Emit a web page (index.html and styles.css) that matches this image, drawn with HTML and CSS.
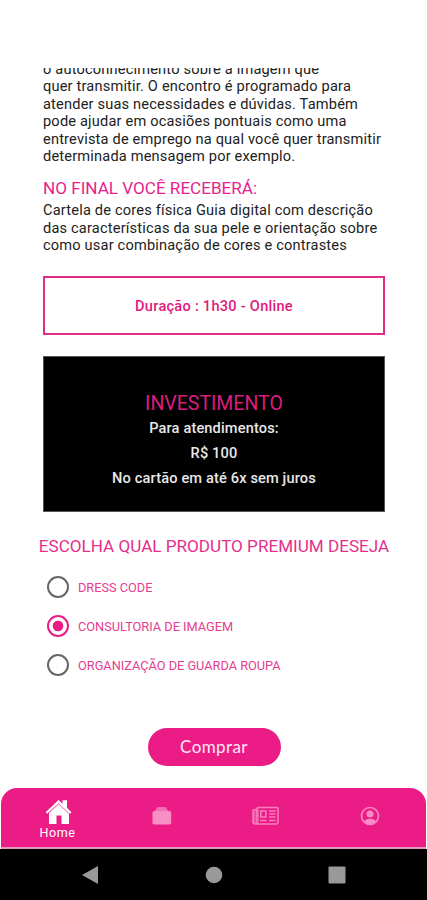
FILE: index.html
```html
<!DOCTYPE html>
<html lang="pt-BR">
<head>
<meta charset="utf-8">
<meta name="viewport" content="width=device-width, initial-scale=1">
<title>Consultoria de imagem</title>
<link rel="stylesheet" href="styles.css">
</head>
<body>
<main class="content">
  <p class="copy intro">o autoconhecimento sobre a imagem que<br>quer transmitir. O encontro é programado para<br>atender suas necessidades e dúvidas. Também<br>pode ajudar em ocasiões pontuais como uma<br>entrevista de emprego na qual você quer transmitir<br>determinada mensagem por exemplo.</p>
  <h2 class="heading">NO FINAL VOCÊ RECEBERÁ:</h2>
  <p class="copy">Cartela de cores física Guia digital com descrição<br>das características da sua pele e orientação sobre<br>como usar combinação de cores e contrastes</p>
  <div class="duration">Duração : 1h30 - Online</div>
  <section class="price">
    <h2 class="price-title">INVESTIMENTO</h2>
    <p>Para atendimentos:</p>
    <p>R$ 100</p>
    <p>No cartão em até 6x sem juros</p>
  </section>
  <h2 class="choose">ESCOLHA QUAL PRODUTO PREMIUM DESEJA</h2>
  <div class="options">
    <label class="option"><input type="radio" name="product"><span>DRESS CODE</span></label>
    <label class="option"><input type="radio" name="product" checked><span>CONSULTORIA DE IMAGEM</span></label>
    <label class="option"><input type="radio" name="product"><span>ORGANIZAÇÃO DE GUARDA ROUPA</span></label>
  </div>
  <button class="buy" type="button">Comprar</button>
</main>
<nav class="tabs">
  <a class="tab active">
    <svg width="28" height="26" viewBox="0 0 28 26"><path d="M14.5 4.5 25 13.5V25h-7.500v-8.500h-5V25H5V13.500z" fill="#fff"/><path d="M1.700 13.200 14.500 1l4 3.700V1.200h4.500v7.600l4.400 4.400-1.400 1.500L14.500 4.300 3.100 14.700z" fill="#fff"/><path d="M3.900 14.800 14.500 5.200l10.600 9.600" fill="none" stroke="#ec1c86" stroke-width=".6"/></svg>
    <span>Home</span>
  </a>
  <a class="tab"><svg width="20" height="18" viewBox="0 0 20 18"><path d="M5.500 0h8l3.200 4.500H2.300z" fill="#f56eb4"/><rect x=".5" y="4" width="18.700" height="13.500" rx="1.800" fill="#f88fc4"/></svg></a>
  <a class="tab"><svg width="28" height="20" viewBox="0 0 28 20"><rect x="1" y="3" width="6" height="15" rx="2" fill="#f04fa2"/><g fill="none" stroke="#f77fbb" stroke-width="1.600"><path d="M5 16.200V3q0-1.500 1.500-1.500h18q1.500 0 1.500 1.500v13q0 2-2 2H3q-2 0-2-2V5q0-1.500 1.500-1.500H5M5 16q0 2-2 2"/><rect x="8.800" y="5" width="5" height="6"/><path d="M17 5h6.500M17 8h6.500M17 11h6.500M8 14.500h6.500M17 14.500h6.500"/></g></svg></a>
  <a class="tab"><svg width="20" height="20" viewBox="0 0 20 20"><circle cx="10" cy="10" r="8.500" fill="none" stroke="#f98cc4" stroke-width="1.600"/><circle cx="10" cy="8" r="3.500" fill="#f98cc4"/><path d="M4 15.200q2-2.400 6-2.400t6 2.400q-2.200 3-6 3t-6-3z" fill="#f98cc4"/></svg></a>
</nav>
<div class="system">
  <svg width="18" height="20" viewBox="0 0 18 20"><path d="M17 1v18L1 10z" fill="#999"/></svg>
  <svg width="18" height="18" viewBox="0 0 18 18"><circle cx="9" cy="9" r="8.300" fill="#999"/></svg>
  <svg width="18" height="18" viewBox="0 0 18 18"><rect x=".5" y=".5" width="17" height="17" rx="1" fill="#999"/></svg>
</div>
</body>
</html>
```
FILE: styles.css
```css
* { box-sizing: border-box; }
body { margin: 0; width: 427px; height: 900px; overflow: hidden; display: flex; flex-direction: column; background: #fff; font-family: Roboto, "Liberation Sans", sans-serif; color: #222; }
h2, p { margin: 0; font-weight: 400; }
.content { height: 720px; flex: none; margin-top: 68px; padding: 0 42px 0 43px; overflow: hidden; display: flex; flex-direction: column; }
.copy { font-size: 14.6px; line-height: 17.4px; white-space: nowrap; letter-spacing: .18px; }
.intro { margin-top: -7px; }
.heading { margin-top: 13px; font-size: 17.1px; line-height: 20px; color: #e91e8c; white-space: nowrap; }
.heading + .copy { margin-top: 4px; }
.duration { height: 59px; margin-top: 21px; flex: none; border: 2px solid #e32b85; display: flex; align-items: center; justify-content: center; font-size: 14.6px; letter-spacing: .25px; font-weight: 500; color: #e01a7c; padding-top: 1px; }
.price { height: 156px; flex: none; margin-top: 21px; padding-top: 34px; background: #000; border: 1px solid #555; text-align: center; color: #e8e8e8; font-size: 14.6px; line-height: 25px; }
.price p { font-weight: 500; letter-spacing: .14px; }
.price-title { font-size: 19.5px; line-height: 25px; color: #dc1c80; }
.choose { margin: 23px -10px 0; text-align: center; font-size: 17.1px; line-height: 22px; color: #e4308c; white-space: nowrap; }
.options { margin: 11px 0 0 4px; display: flex; flex-direction: column; }
.option { height: 39px; display: flex; align-items: center; gap: 9px; font-size: 12.75px; color: #e5408f; }
.option input { appearance: none; width: 22px; height: 22px; margin: 0; border: 2px solid #666; border-radius: 50%; }
.option input:checked { border-color: #e91e84; background: radial-gradient(circle, #e91e84 5px, transparent 5.7px); }
.buy { width: 133px; height: 38px; flex: none; margin: 43px auto 0; padding: 0; border: 0; border-radius: 19px; background: #ec1c86; color: #ffe9f5; font: 400 17px/38px Lato, sans-serif; letter-spacing: .4px; }
.tabs { height: 61px; flex: none; margin: 0 1px; display: grid; grid-template-columns: repeat(4, 104.3px); justify-content: center; background: #ec1c86; border-radius: 16px 16px 0 0; border-bottom: 2px solid #e596bd; }
.tab { display: flex; flex-direction: column; align-items: center; justify-content: center; padding: 0 0 3px 1px; }
.active { color: #fff; font-size: 12.5px; line-height: 14px; letter-spacing: .6px; padding: 3px 0 0 1px; }
.active span { margin-top: 1px; }
.system { flex: 1; background: #000; display: flex; justify-content: space-between; align-items: center; padding: 0 81px; }
```
